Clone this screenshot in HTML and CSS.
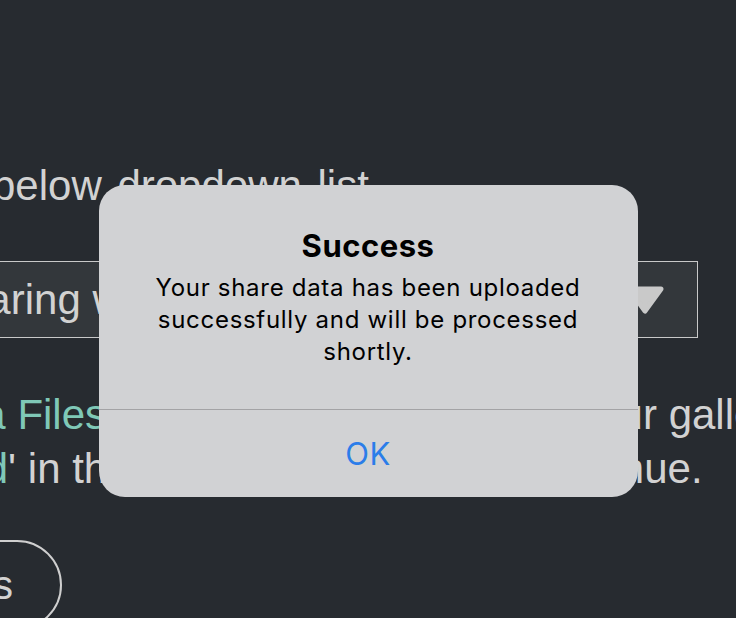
FILE: index.html
```html
<!DOCTYPE html>
<html lang="en">
<head>
    <meta charset="UTF-8">
    <meta name="viewport" content="width=device-width, initial-scale=1.0">
    <title>Share Data</title>
    <link rel="stylesheet" href="styles.css">
</head>
<body>

    <div class="page">
        <div class="line lead">below dropdown list</div>

        <div class="select">
            <span>Sharing with</span>
            <svg class="caret" width="38" height="28" viewBox="0 0 38 28">
                <polygon points="3,3 35,3 19,25" fill="#c9c9c9" stroke="#c9c9c9" stroke-width="5" stroke-linejoin="round"/>
            </svg>
        </div>

        <div class="line line-files"><span class="accent">Data Files</span> app, select images from your gallery</div>
        <div class="line line-upload"><span class="accent">Upload</span>' in the upper right corner to continue.</div>

        <div class="actions">
            <button class="pill">My Uploads</button>
        </div>
    </div>

    <div class="overlay">
        <div class="alert">
            <div class="alert-body">
                <h3 class="alert-title">Success</h3>
                <p class="alert-text">Your share data has been uploaded<br>successfully and will be processed<br>shortly.</p>
            </div>
            <div class="alert-btn">OK</div>
        </div>
    </div>

</body>
</html>
```

FILE: styles.css
```css
body {
    margin: 0;
    height: 618px;
    overflow: hidden;
    background: #272b30;
    font-family: "Liberation Sans", Arial, sans-serif;
    color: #d2d2d2;
}

.page {
    padding-top: 159px;
    font-size: 42px;
    line-height: 54px;
    white-space: nowrap;
}

.lead {
    margin-left: -8px;
    word-spacing: 4px;
}

.select {
    display: flex;
    align-items: center;
    justify-content: space-between;
    box-sizing: border-box;
    width: 778px;
    height: 77px;
    margin: 48px 0 50px -80px;
    padding: 0 33px 0 15px;
    border: 1px solid #c9c9c9;
    background: #33373b;
}

.caret {
    flex-shrink: 0;
}

.line-files {
    margin-left: -83px;
}

.line-upload {
    margin-left: -125px;
}

.accent {
    color: #7fc8b7;
}

.actions {
    width: 62px;
    display: flex;
    justify-content: flex-end;
    margin-top: 44px;
}

.pill {
    flex-shrink: 0;
    display: flex;
    align-items: center;
    box-sizing: border-box;
    height: 90px;
    padding: 0 47px 0 30px;
    border: 2px solid #cfcfcf;
    border-radius: 45px;
    background: none;
    font-family: inherit;
    font-size: 40px;
    line-height: 54px;
    color: #d2d2d2;
}

.overlay {
    position: fixed;
    top: 0;
    left: 0;
    right: 0;
    bottom: 0;
    display: flex;
    justify-content: center;
    align-items: flex-start;
    padding-top: 185px;
}

.alert {
    width: 539px;
    height: 312px;
    display: flex;
    flex-direction: column;
    background: #d1d2d4;
    border-radius: 26px;
    font-family: Inter, "Liberation Sans", sans-serif;
    color: #000;
    text-align: center;
    white-space: nowrap;
}

.alert-body {
    flex: 1;
    padding: 42px 20px 0;
}

.alert-title {
    margin: 0;
    font-size: 31px;
    font-weight: 700;
    line-height: 38px;
    letter-spacing: 0.5px;
}

.alert-text {
    margin: 7px 0 0;
    font-size: 24px;
    line-height: 32px;
    letter-spacing: 0.7px;
}

.alert-btn {
    box-sizing: border-box;
    height: 88px;
    display: flex;
    align-items: center;
    justify-content: center;
    border-top: 1px solid #a3a3a5;
    color: #2b7de9;
    font-size: 31px;
    letter-spacing: 0.5px;
}
```
